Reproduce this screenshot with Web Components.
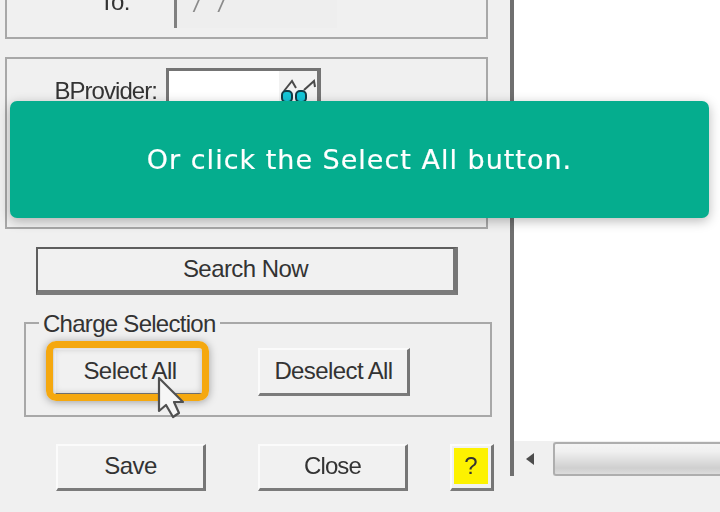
<!DOCTYPE html>
<html><head><meta charset="utf-8">
<style>
html,body{margin:0;padding:0;width:720px;height:512px;overflow:hidden;background:#f0f0f0}
</style></head>
<body>
<x-app>
  <x-panel>
    <x-group style="--h:59px;--mt:-20px;--justify:flex-end">
      <x-field-row label="To:" value="/ /"></x-field-row>
    </x-group>
    <x-group style="--h:172px;--mt:18px;--justify:flex-start">
      <x-lookup label="BProvider:"></x-lookup>
    </x-group>
    <x-btn primary style="--w:422px;--h:48px;--ml:31px;--mt:18px">Search Now</x-btn>
    <x-fieldset legend="Charge Selection">
      <x-btn highlighted style="--w:153px;--h:48px">Select All</x-btn>
      <x-btn style="--w:152px;--h:48px;--ml:51px;--ls:-.6px">Deselect All</x-btn>
    </x-fieldset>
    <x-actions>
      <x-btn style="--w:150px;--h:47px">Save</x-btn>
      <x-btn style="--w:150px;--h:47px;--ml:52px;--ls:-.9px">Close</x-btn>
      <x-btn help style="--w:44px;--h:47px;--ml:42px">?</x-btn>
    </x-actions>
  </x-panel>
  <x-viewer></x-viewer>
  <x-cursor></x-cursor>
  <x-tip>Or click the Select All button.</x-tip>
</x-app>
<script>
const FONT='"Liberation Sans",Arial,sans-serif';
function def(name,html){
  customElements.define(name,class extends HTMLElement{
    connectedCallback(){
      if(this.shadowRoot)return;
      const r=this.attachShadow({mode:'open'});
      r.innerHTML=typeof html==='function'?html(this):html;
    }
  });
}
def('x-app',`<style>:host{display:flex;position:relative;width:720px;height:512px;overflow:hidden;background:#f0f0f0;color:#333;font:24px ${FONT}}</style><slot></slot>`);
def('x-panel',`<style>:host{display:flex;flex-direction:column;flex:none;width:505px;padding-left:5px;filter:blur(.5px)}</style><slot></slot>`);
def('x-group',`<style>:host{display:flex;flex-direction:column;flex:none;box-sizing:border-box;width:483px;height:var(--h);margin-top:var(--mt);justify-content:var(--justify);border:2px solid #a8a8a8}</style><slot></slot>`);
def('x-field-row',el=>`<style>
:host{display:flex;align-items:flex-end;margin-bottom:9px}
.l{width:123px;text-align:right;font-size:24px;letter-spacing:-.5px;line-height:24px;margin-bottom:14px}
.f{box-sizing:border-box;width:163px;height:48px;margin-left:44px;border-left:3px solid #808080;background:#eeeeee;color:#8a8a8a;font-size:23px;padding:13px 0 0 17px;line-height:22px;letter-spacing:6px;font-style:italic}
</style><span class="l">${el.getAttribute('label')}</span><span class="f">${el.getAttribute('value')}</span>`);
def('x-lookup',el=>`<style>
:host{display:flex;align-items:flex-start;padding-top:9px}
.l{width:150px;text-align:right;font-size:24px;letter-spacing:-.95px;line-height:28px;margin-top:9px}
.b{display:flex;box-sizing:border-box;width:155px;height:60px;margin-left:9px;border:3px solid #747474;border-right-width:4px;background:#fff}
.i{flex:1}
.g{flex:none;width:38px;background:#f2f2f2}
svg{display:block}
</style><span class="l">${el.getAttribute('label')}</span><div class="b"><div class="i"></div><div class="g"><svg width="38" height="34" viewBox="0 0 38 34"><path d="M5 20 13 10l4 7M25 19l10-9 1 6" fill="none" stroke="#4a4a4a" stroke-width="2"/><rect x="3" y="20" width="10" height="11" rx="4" fill="#13c6d8" stroke="#123c46" stroke-width="2"/><rect x="17" y="20" width="10" height="11" rx="4" fill="#13c6d8" stroke="#123c46" stroke-width="2"/></svg></div></div>`);
def('x-btn',el=>{
 const p=el.hasAttribute('primary'),h=el.hasAttribute('help'),s=el.hasAttribute('highlighted');
 return `<style>
:host{display:block;position:relative;flex:none;width:var(--w);height:var(--h);margin-left:var(--ml,0);margin-top:var(--mt,0)}
.b{box-sizing:border-box;width:100%;height:100%;display:flex;align-items:center;justify-content:center;background:#f1f1f1;
 border-style:solid;border-color:${p?'#5e5e5e':'#fbfbfb'};border-width:2px;border-right:${p?5:3}px solid #767676;border-bottom:${p?5:3}px solid #7b7b7b;
 font-size:24px;letter-spacing:${h?0:'var(--ls,-.55px)'};line-height:28px;padding-bottom:2px}
.c{${h?'background:#fdf200;align-self:stretch;flex:1;display:flex;align-items:center;justify-content:center;margin:2px 3px 2px 2px':''}}
.hl{position:absolute;left:-8px;top:-7px;right:-2px;bottom:-5px;border:7px solid #f5a80f;border-radius:10px;box-shadow:0 1px 8px rgba(0,0,0,.35),inset 0 0 7px rgba(0,0,0,.22)}
</style><div class="b"><span class="c"><slot></slot></span></div>${s?'<div class="hl"></div>':''}`});
def('x-fieldset',el=>`<style>
:host{display:flex;flex:none;box-sizing:border-box;position:relative;width:468px;height:95px;margin:27px 0 0 19px;border:2px solid #a8a8a8;padding:24px 0 0 28px}
.lg{position:absolute;left:13px;top:-14px;padding:0 4px;background:#f0f0f0;font-size:24px;letter-spacing:-.72px;line-height:28px}
</style><span class="lg">${el.getAttribute('legend')}</span><slot></slot>`);
def('x-actions',`<style>:host{display:flex;flex:none;margin:27px 0 0 51px}</style><slot></slot>`);
def('x-viewer',`<style>
:host{display:flex;flex-direction:column;flex:1;align-self:flex-start;height:476px;box-sizing:border-box;border-left:4px solid #6f6f6f;background:#fff;filter:blur(.5px)}
.p{flex:1}
.bar{display:flex;flex:none;height:35px;background:#f0f0f0}
.a{flex:none;width:39px;display:flex;align-items:center;justify-content:center;padding-right:8px;box-sizing:border-box}
.a i{display:block;width:0;height:0;border:6px solid transparent;border-left:0;border-right:8px solid #4c4c4c}
.t{flex:1;box-sizing:border-box;margin-top:1px;border:2px solid #aeaeae;border-right:0;border-radius:3px 0 0 3px;background:linear-gradient(#f4f4f4 0,#f0f0f0 25%,#cfcfcf 80%,#dcdcdc)}
</style><div class="p"></div><div class="bar"><div class="a"><i></i></div><div class="t"></div></div>`);
def('x-cursor',`<style>:host{display:block;position:absolute;left:155px;top:376px;width:32px;height:44px}svg{display:block;filter:blur(.5px)}</style>
<svg width="32" height="44" viewBox="0 0 32 44"><path d="M4 2V35L11 29 18 41 24 37 19 26H28Z" fill="#f6f6f6" stroke="#505050" stroke-width="2.2" stroke-linejoin="round"/></svg>`);
def('x-tip',`<style>:host{display:flex;position:absolute;left:10px;top:101px;width:699px;height:117px;align-items:center;justify-content:center;background:#05ad8e;border-radius:7px;box-shadow:0 3px 12px rgba(0,0,0,.28);color:#fff;font:400 27px "DejaVu Sans",Inter,sans-serif;letter-spacing:1px;-webkit-text-stroke:.2px #fff}</style><slot></slot>`);
</script>
</body></html>
